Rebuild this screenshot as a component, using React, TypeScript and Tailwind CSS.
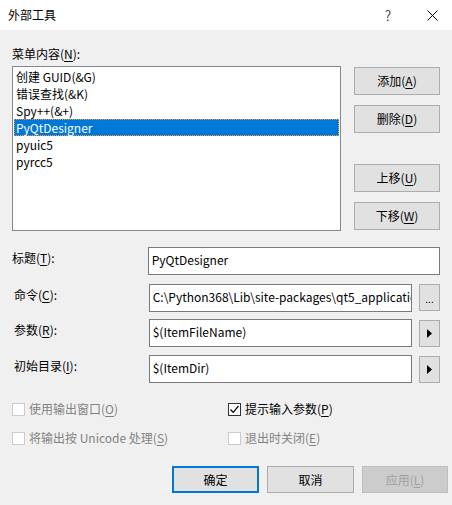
import React from "react";

const FONT = '"Microsoft YaHei UI", "Noto Sans CJK SC", "Noto Sans", sans-serif';

// underlined access key letter
const K = ({ c }: { c: string }) => <span className="underline underline-offset-2 decoration-1">{c}</span>;

const ITEMS = ["创建 GUID(&G)", "错误查找(&K)", "Spy++(&+)", "PyQtDesigner", "pyuic5", "pyrcc5"];

function SideButton({ children, className = "" }: { children: React.ReactNode; className?: string }) {
  return (
    <div className={"h-[28px] w-[86px] flex items-center justify-center bg-[#e1e1e1] border border-[#adadad] text-[12px] text-black " + className}>
      {children}
    </div>
  );
}

function Arrow() {
  return (
    <div className="h-[27px] w-[21px] ml-[7px] mt-[1px] flex items-center justify-center bg-[#e1e1e1] border border-[#adadad]">
      <svg width="5" height="9" viewBox="0 0 5 9">
        <path d="M0 0 L5 4.5 L0 9 Z" fill="#000" />
      </svg>
    </div>
  );
}

function Field({ label, value, extra, className = "", wide = false, labelPad = "pl-[2px]" }: {
  label: React.ReactNode; value: string; extra?: React.ReactNode; className?: string; wide?: boolean; labelPad?: string;
}) {
  return (
    <div className={"flex h-[28px] " + className}>
      <div className={"w-[137px] pt-[3px] leading-[16px] text-[12px] " + labelPad}>{label}</div>
      <div className={"h-[28px] bg-white border border-[#7a7a7a] pl-[3px] pt-[4px] leading-[16px] text-[12px] overflow-hidden whitespace-nowrap " + (wide ? "w-[295px]" : "w-[264px]")}>
        {value}
      </div>
      {extra}
    </div>
  );
}

function Check({ label, checked = false, disabled = false, className = "" }: {
  label: React.ReactNode; checked?: boolean; disabled?: boolean; className?: string;
}) {
  return (
    <div className={"flex items-center h-[16px] " + className}>
      <div className={"w-[13px] h-[13px] bg-white border flex items-center justify-center " + (disabled ? "border-[#cccccc]" : "border-[#333333]")}>
        {checked && (
          <svg width="11" height="11" viewBox="0 0 11 11">
            <path d="M1.5 5.5 L4.2 8.3 L9.5 2" fill="none" stroke="#000" strokeWidth="1.2" />
          </svg>
        )}
      </div>
      <span className={"ml-[4px] text-[12px] leading-[16px] whitespace-nowrap " + (disabled ? "text-[#838383]" : "text-black")}>{label}</span>
    </div>
  );
}

export default function App() {
  return (
    <div className="w-[452px] h-[505px] bg-[#f0f0f0] text-black overflow-hidden" style={{ fontFamily: FONT }}>
      {/* ── Title bar ── */}
      <div className="h-[30px] bg-white flex items-center">
        <span className="ml-[8px] text-[12px] leading-[16px]">外部工具</span>
        <span className="ml-auto mr-[36px] text-[14px] leading-[16px] font-light">?</span>
        <svg width="11" height="11" viewBox="0 0 11 11" className="mr-[14px]">
          <path d="M0.5 0.5 L10.5 10.5 M10.5 0.5 L0.5 10.5" stroke="#000" strokeWidth="1" />
        </svg>
      </div>

      <div className="px-[12px]">
        <div className="mt-[16px] h-[16px] leading-[16px] text-[12px]">
          菜单内容(<K c="N" />):
        </div>

        {/* ── List + side buttons ── */}
        <div className="mt-[4px] flex">
          <div className="w-[331px] h-[165px] bg-white border border-[#828790] p-[1px]">
            {ITEMS.map((it) => (
              <div
                key={it}
                className={
                  "h-[17px] leading-[15px] text-[12px] pl-[1px] whitespace-nowrap " +
                  (it === "PyQtDesigner"
                    ? "bg-[#0078d7] text-white border border-dotted border-[#f39a3a]"
                    : "border border-transparent")
                }
              >
                {it}
              </div>
            ))}
          </div>
          <div className="ml-[13px] pt-[1px] flex flex-col">
            <SideButton>添加(<K c="A" />)</SideButton>
            <SideButton className="mt-[10px]">删除(<K c="D" />)</SideButton>
            <SideButton className="mt-[31px]">上移(<K c="U" />)</SideButton>
            <SideButton className="mt-[10px]">下移(<K c="W" />)</SideButton>
          </div>
        </div>

        {/* ── Fields ── */}
        <Field className="mt-[16px]" wide labelPad="" label={<>标题(<K c="T" />):</>} value="PyQtDesigner" />
        <Field
          className="mt-[9px]"
          label={<>命令(<K c="C" />):</>}
          value="C:\Python368\Lib\site-packages\qt5_applications\Qt\bin\designer.exe"
          extra={
            <div className="h-[27px] w-[21px] ml-[7px] flex items-end justify-center pb-[6px] bg-[#e1e1e1] border border-[#adadad] text-[10px] leading-[10px]">
              ...
            </div>
          }
        />
        <Field className="mt-[7px]" label={<>参数(<K c="R" />):</>} value="$(ItemFileName)" extra={<Arrow />} />
        <Field className="mt-[8px]" label={<>初始目录(<K c="I" />):</>} value="$(ItemDir)" extra={<Arrow />} />

        {/* ── Checkboxes ── */}
        <div className="mt-[18px] flex">
          <Check disabled className="w-[216px]" label={<>使用输出窗口(<K c="O" />)</>} />
          <Check checked label={<>提示输入参数(<K c="P" />)</>} />
        </div>
        <div className="mt-[13px] flex">
          <Check disabled className="w-[216px]" label={<>将输出按 Unicode 处理(<K c="S" />)</>} />
          <Check disabled label={<>退出时关闭(<K c="E" />)</>} />
        </div>
      </div>

      {/* ── Dialog buttons ── */}
      <div className="mt-[20px] flex justify-end pr-[4px] gap-[8px]">
        <div className="h-[27px] w-[87px] flex items-center justify-center bg-[#e1e1e1] border-2 border-[#0078d7] text-[12px]">确定</div>
        <div className="h-[27px] w-[87px] flex items-center justify-center bg-[#e1e1e1] border border-[#adadad] text-[12px]">取消</div>
        <div className="h-[27px] w-[86px] flex items-center justify-center bg-[#cccccc] border border-[#bfbfbf] text-[12px] text-[#a0a0a0]">
          应用(<K c="L" />)
        </div>
      </div>
    </div>
  );
}
